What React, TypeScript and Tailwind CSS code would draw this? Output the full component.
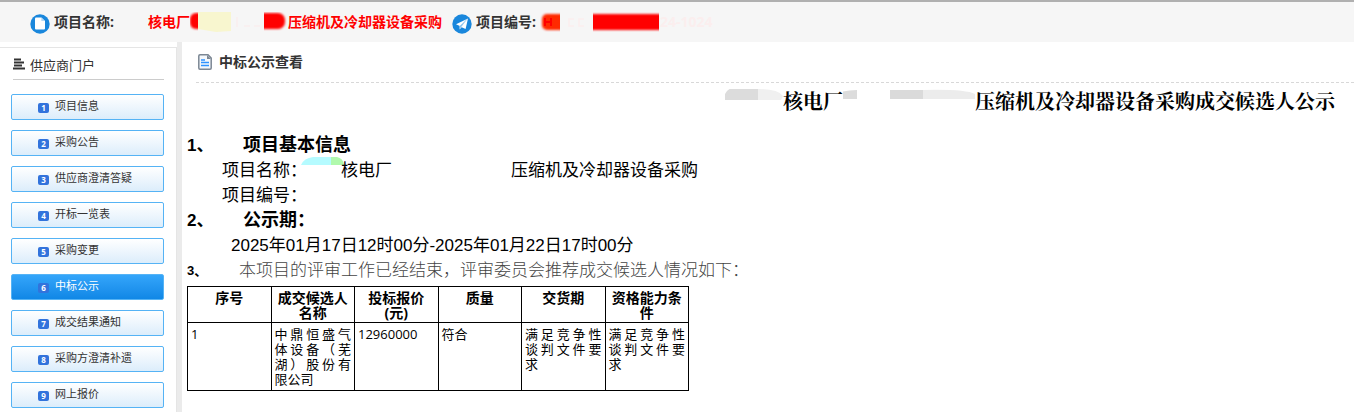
import type { ReactNode } from "react";
import clsx from "clsx";

const menu = [
  "项目信息",
  "采购公告",
  "供应商澄清答疑",
  "开标一览表",
  "采购变更",
  "中标公示",
  "成交结果通知",
  "采购方澄清补遗",
  "网上报价",
];

const columns = ["序号", "成交候选人名称", "投标报价(元)", "质量", "交货期", "资格能力条件"];

const rows = [
  ["1", "中鼎恒盛气体设备（芜湖）股份有限公司", "12960000", "符合", "满足竞争性谈判文件要求", "满足竞争性谈判文件要求"],
];

function FileBadge() {
  return (
    <svg className="w-5 h-5 shrink-0" viewBox="0 0 20 20" aria-hidden="true">
      <circle cx="10" cy="10" r="9.7" fill="#1a87dc" />
      <path d="M6 3.5h5.4L15 7v7.4a1 1 0 0 1-1 1H6a1 1 0 0 1-1-1V4.5a1 1 0 0 1 1-1z" fill="#fff" />
      <path d="M11.3 3.5V7H15z" fill="#b5d8f5" />
    </svg>
  );
}

function PlaneBadge() {
  return (
    <svg className="w-5 h-5 shrink-0" viewBox="0 0 20 20" aria-hidden="true">
      <circle cx="10" cy="10" r="9.7" fill="#1a87dc" />
      <path d="M16 4.600 4 10.200l3.800 1.800z" fill="#fff" />
      <path d="M16 4.600 7.600 11.900v3.600l2-2.200 4 1.700z" fill="#fff" />
      <path d="M15 5.600 7.800 11.900l.2 2.500z" fill="#8cc3ee" />
    </svg>
  );
}

function DocIcon() {
  return (
    <svg className="w-4 h-4 shrink-0" viewBox="0 0 16 16" aria-hidden="true">
      <path d="M3 .8h8L14.200 4V14a1.200 1.200 0 0 1-1.200 1.200H3A1.200 1.200 0 0 1 1.800 14V2A1.200 1.200 0 0 1 3 .8z" fill="#f4f8fc" stroke="#7c8794" strokeWidth="1.5" />
      <path d="M10 1v4h4z" fill="#7c8794" />
      <path d="M4 6h4M4 8.500h8M4 11.500h8" stroke="#2f93ff" strokeWidth="1.500" />
    </svg>
  );
}

function MenuIcon() {
  return (
    <svg className="w-3 h-3 shrink-0 mb-1" viewBox="0 0 12 12" aria-hidden="true">
      <path d="M1 1.500h7M1 4.500h10M1 7.500h8M0 10.500h12" stroke="#333" strokeWidth="1.800" />
    </svg>
  );
}

// smears left where a name or number has been wiped out
function NameMask() {
  return (
    <svg className="w-[98px] h-5 shrink-0" viewBox="0 0 98 20" aria-hidden="true">
      <defs>
        <filter id="soft" x="-20%" y="-20%" width="140%" height="140%">
          <feGaussianBlur stdDeviation="1.2" />
        </filter>
        <clipPath id="nameLeft"><rect width="8" height="20" /></clipPath>
        <clipPath id="nameRight"><rect x="74" width="24" height="20" /></clipPath>
      </defs>
      <g clipPath="url(#nameLeft)">
        <rect x="0" y="1" width="18" height="16" rx="6" fill="#f00" filter="url(#soft)" />
      </g>
      <path d="M8 0h33v19l-15 1-18-3z" fill="#f8f6cf" />
      <path d="M47 5v10M54 14h6M64 14h6" stroke="#fbeaea" strokeWidth="1" />
      <g clipPath="url(#nameRight)">
        <rect x="64" y="1" width="31" height="16" rx="7" fill="#f00" filter="url(#soft)" />
      </g>
    </svg>
  );
}

function CodeMask() {
  return (
    <svg className="w-[120px] h-5 shrink-0" viewBox="0 0 120 20" aria-hidden="true">
      <defs>
        <clipPath id="codeLeft"><rect width="20" height="20" /></clipPath>
        <clipPath id="codeMain"><rect x="53" width="66" height="20" /></clipPath>
      </defs>
      <g clipPath="url(#codeLeft)">
        <rect x="2" y="2" width="28" height="16" rx="5" fill="#ff2a00" filter="url(#soft)" />
      </g>
      <path d="M5 6v8M11 6v8M5 10h6" stroke="#f00" strokeWidth="2" />
      <path d="M34 7h-5v7h5M44 7h-5v7h5" fill="none" stroke="#fbeeee" strokeWidth="1.500" />
      <g clipPath="url(#codeMain)">
        <rect x="45" y="2" width="82" height="16" fill="#f00" filter="url(#soft)" />
      </g>
    </svg>
  );
}

function TitleMask({ wide }: { wide?: boolean }) {
  if (wide) {
    return (
      <svg className="w-[132px] h-6 shrink-0" viewBox="0 0 132 24" aria-hidden="true">
        <path d="M-8 6Q0 1 14 1v9H-4z" fill="#dcdcdc" />
        <path d="M47 1h33v9H47z" fill="#dadada" />
        <path d="M80 1q42-1 52 4v5H80z" fill="#ececec" />
      </svg>
    );
  }
  return (
    <svg className="w-[58px] h-6 shrink-0" viewBox="0 0 58 24" aria-hidden="true">
      <path d="M0 11V5q3-7 14-7h19v13z" fill="#dcdcdc" />
      <path d="M33 0q20 0 25 7l-2 4H33z" fill="#f0f0f0" />
    </svg>
  );
}

function Heading({ no, children }: { no: string; children: ReactNode }) {
  return (
    <h3 className="flex font-bold">
      <span className="w-14">{no}、</span>
      <span className="text-lg leading-[25px]">{children}</span>
    </h3>
  );
}

function TopBar() {
  return (
    <header className="flex items-center h-[42px] pl-[30px] border-t-2 border-[#b0b0b0] bg-[#f6f6f6] text-sm font-bold text-[#333] whitespace-nowrap">
      <span className="pt-1">
        <FileBadge />
      </span>
      <span className="ml-1">项目名称:</span>
      <span className="flex items-center ml-[34px] text-[#f00]">
        核电厂
        <NameMask />
        压缩机及冷却器设备采购
      </span>
      <span className="ml-[10px] pt-1">
        <PlaneBadge />
      </span>
      <span className="ml-1">项目编号:</span>
      <span className="flex items-center ml-1 text-[#fbeeee]">
        <CodeMask />
        24-1024
      </span>
    </header>
  );
}

function Sidebar() {
  return (
    <aside className="w-[182px] shrink-0 pt-[5px] border-r-[5px] border-[#ebebeb]">
      <div className="h-full border-t border-r border-[#e5e5e5] pl-[11px] pr-3">
        <h2 className="flex items-center gap-[5px] ml-[2px] h-8 pt-[5px] border-b border-[#ccc] text-[13px] text-[#333]">
          <MenuIcon />
          供应商门户
        </h2>
        <nav className="flex flex-col gap-[10px] pt-[14px] pb-1">
          {menu.map((label, i) => (
            <button
              key={label}
              type="button"
              className={clsx(
                "flex items-center gap-[6px] h-[26px] pl-[26px] rounded-xs border border-[#55b3f5] text-[11px] leading-4 bg-linear-to-b",
                label === "中标公示" ? "from-[#33a5fa] to-[#0f87e6] text-white" : "from-white to-[#dcedfb] text-[#333]"
              )}
            >
              <span className="flex items-center justify-center w-[11px] h-[10px] mt-[2px] rounded-xs bg-[#3273dc] text-white text-[8px] leading-none font-bold">
                {i + 1}
              </span>
              <span className="pb-[2px]">{label}</span>
            </button>
          ))}
        </nav>
      </div>
    </aside>
  );
}

function ResultTable() {
  return (
    <table className="table-fixed w-[502px] border-collapse text-black leading-[15px]">
      <thead>
        <tr>
          {columns.map((name) => (
            <th key={name} scope="col" className="border border-black px-[3px] pt-[3px] pb-[2px] align-top text-sm leading-[15px] font-bold">
              {name}
            </th>
          ))}
        </tr>
      </thead>
      <tbody>
        {rows.map((row) => (
          <tr key={row[0]}>
            {row.map((cell, i) => (
              <td key={i} className="border border-black px-[3px] pt-1 pb-[3px] align-top text-[13px] leading-[15px] text-justify">
                {cell}
              </td>
            ))}
          </tr>
        ))}
      </tbody>
    </table>
  );
}

export default function App() {
  return (
    <div className="min-h-screen flex flex-col bg-white font-['Open_Sans','Noto_Sans_CJK_SC',sans-serif]">
      <TopBar />
      <div className="flex flex-1">
        <Sidebar />
        <main className="flex-1 min-w-0">
          <h1 className="flex items-center gap-[6px] ml-[14px] pl-px h-[41px] border-b border-dashed border-[#d8d8d8] text-sm font-bold text-[#333]">
            <DocIcon />
            中标公示查看
          </h1>

          <h2 className="flex justify-end items-center pr-[19px] h-9 text-xl leading-6 font-bold text-black whitespace-nowrap font-['Noto_Serif_CJK_SC','Noto_Sans_CJK_SC',serif]">
            <TitleMask />
            核电厂
            <TitleMask wide />
            压缩机及冷却器设备采购成交候选人公示
          </h2>

          <article className="pl-[5px] pt-[14px] text-[17px] leading-[25px] text-black font-['Liberation_Sans','Noto_Sans_CJK_SC',sans-serif]">
            <Heading no="1">项目基本信息</Heading>
            <p className="flex pl-[35px]">
              项目名称：
              <svg className="w-[34px] h-[25px] overflow-visible" viewBox="0 0 34 25" aria-hidden="true">
                <path d="M-6 7q3-7 12-8h18v8z" fill="#b5fbff" />
                <path d="M24-1h6q6 1 7 8H24z" fill="#b0f9ac" />
              </svg>
              核电厂
              <span className="w-[119px]" />
              压缩机及冷却器设备采购
            </p>
            <p className="pl-[35px]">项目编号：</p>
            <Heading no="2">公示期：</Heading>
            <p className="pl-11">2025年01月17日12时00分-2025年01月22日17时00分</p>
            <p className="flex text-[#444] font-light">
              <span className="w-[52px] text-[13px] font-bold text-black">3、</span>
              本项目的评审工作已经结束，评审委员会推荐成交候选人情况如下：
            </p>
          </article>

          <div className="pl-[5px] pt-[3px]">
            <ResultTable />
          </div>
        </main>
      </div>
    </div>
  );
}
